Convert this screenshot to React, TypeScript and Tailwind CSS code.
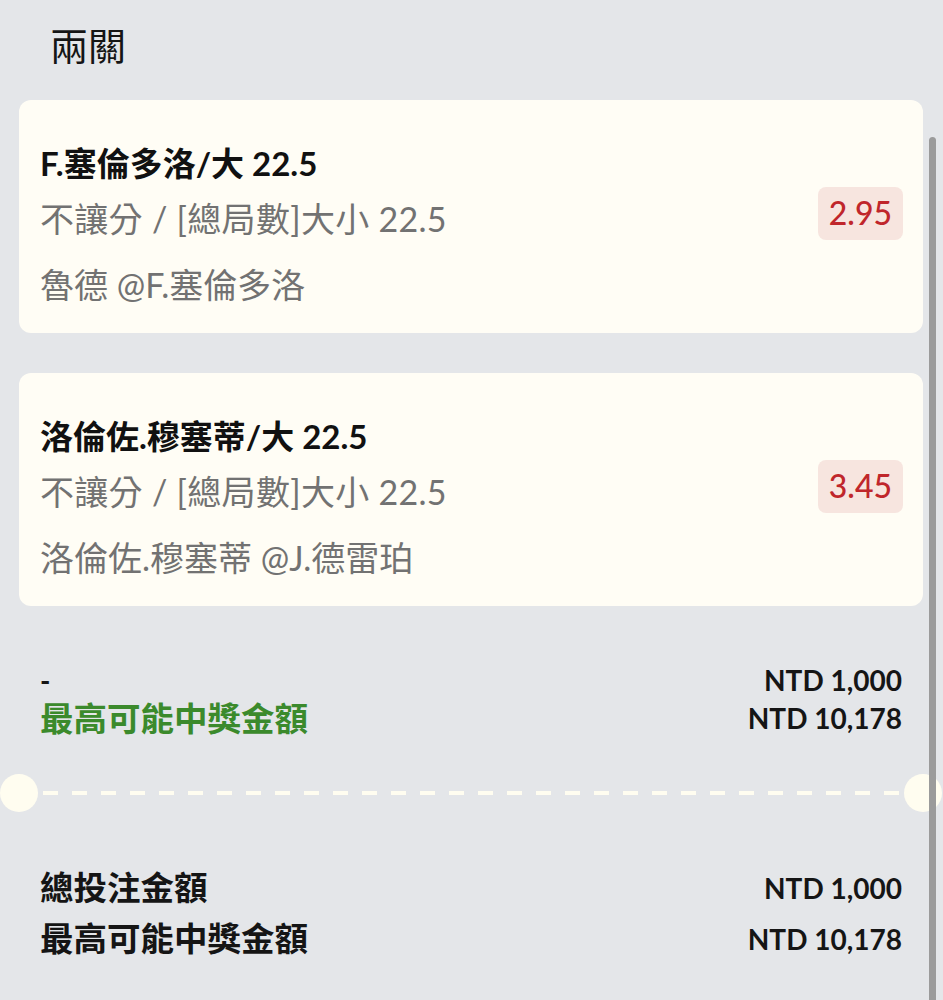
export default function App() {
  const legs = [
    {
      title: 'F.塞倫多洛/大 22.5',
      market: '不讓分 / [總局數]大小 22.5',
      match: '魯德 @F.塞倫多洛',
      odds: '2.95',
    },
    {
      title: '洛倫佐.穆塞蒂/大 22.5',
      market: '不讓分 / [總局數]大小 22.5',
      match: '洛倫佐.穆塞蒂 @J.德雷珀',
      odds: '3.45',
    },
  ];

  return (
    <div className="relative min-h-[1000px] overflow-hidden bg-[#e4e6e9] font-['Lato','Noto_Sans_CJK_TC',sans-serif] text-[#151515]">
      {/* scrollbar */}
      <div className="absolute right-[7px] top-[137px] h-[880px] w-[7px] rounded-t-full bg-[#9b9b9b] z-10" />

      <div className="pl-[19px] pr-[20px]">
        <h2 className="pl-[31px] pt-[20px] h-[100px] text-[38px] leading-[50px] font-normal">兩關</h2>

        {/* legs */}
        <div className="flex flex-col gap-[40px]">
          {legs.map((leg) => (
            <div
              key={leg.title}
              className="flex items-center justify-between rounded-[12px] bg-[#fffdf5] pl-[21px] pr-[20px] pt-[35px] pb-[20px]"
            >
              <div className="flex flex-col">
                <div className="h-[56px] text-[33px] leading-[56px] font-bold text-[#111]">{leg.title}</div>
                <div className="h-[56px] text-[34px] leading-[56px] text-[#727272] tracking-[0.3px]">{leg.market}</div>
                <div className="mt-[10px] h-[56px] text-[34px] leading-[56px] text-[#727272]">{leg.match}</div>
              </div>
              <div className="-mt-[22px] rounded-[8px] bg-[#f7e5df] px-[11px] h-[53px] flex items-center text-[32px] font-medium text-[#c0262b]">
                {leg.odds}
              </div>
            </div>
          ))}
        </div>

        {/* leg summary */}
        <div className="mt-[55px] px-[21px] flex justify-between">
          <div className="flex flex-col">
            <div className="h-[38px] leading-[38px] text-[28px] font-bold">-</div>
            <div className="h-[38px] leading-[38px] text-[33.5px] font-bold text-[#3b8a2c]">最高可能中獎金額</div>
          </div>
          <div className="flex flex-col items-end">
            <div className="h-[38px] leading-[38px] text-[28px] font-bold">NTD 1,000</div>
            <div className="h-[38px] leading-[38px] text-[28px] font-bold">NTD 10,178</div>
          </div>
        </div>

        {/* ticket divider */}
        <div className="relative mt-[37px] h-[38px] flex items-center px-[24px]">
          <div className="absolute -left-[19px] top-0 h-[38px] w-[38px] rounded-full bg-[#fffdf0]" />
          <div className="h-[4px] w-full bg-[repeating-linear-gradient(90deg,#fffdf0_0_15px,transparent_15px_29px)]" />
          <div className="absolute -right-[19px] top-0 h-[38px] w-[38px] rounded-full bg-[#fffdf0]" />
        </div>

        {/* totals */}
        <div className="mt-[50px] px-[21px] flex flex-col">
          <div className="flex h-[51px] items-center justify-between">
            <span className="text-[33.5px] font-bold">總投注金額</span>
            <span className="text-[28px] font-bold">NTD 1,000</span>
          </div>
          <div className="flex h-[51px] items-center justify-between">
            <span className="text-[33.5px] font-bold">最高可能中獎金額</span>
            <span className="text-[28px] font-bold">NTD 10,178</span>
          </div>
        </div>
      </div>
    </div>
  );
}
